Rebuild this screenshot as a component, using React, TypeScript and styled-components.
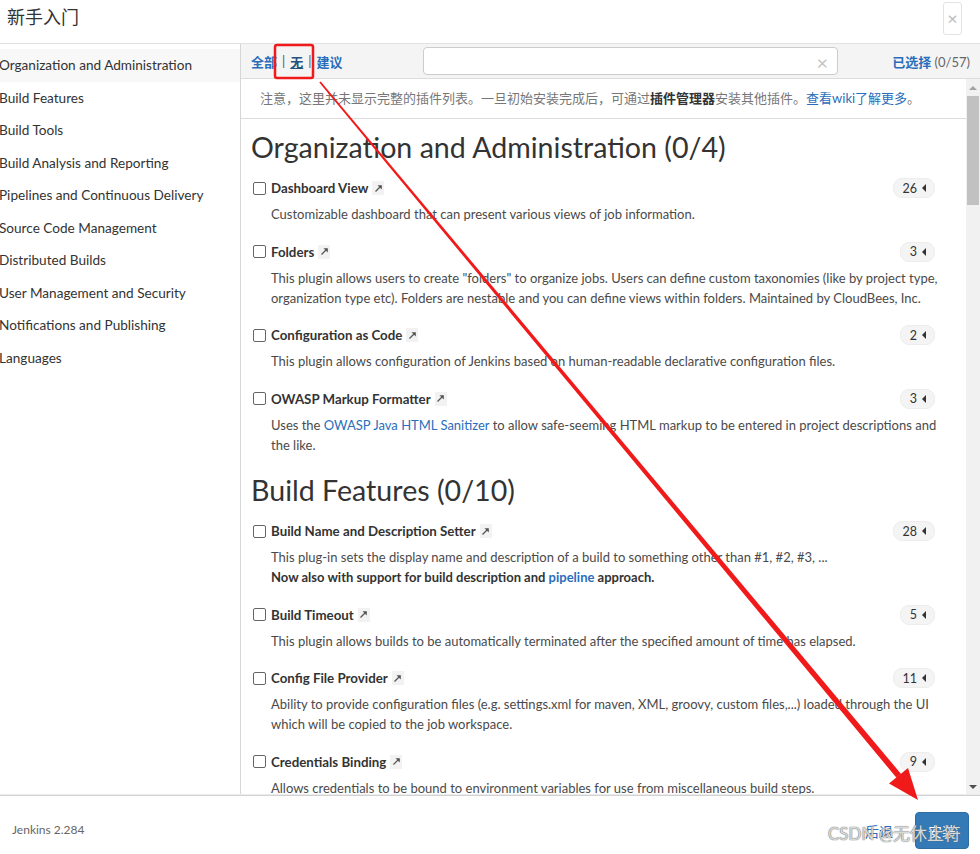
import React from "react";
import styled, { createGlobalStyle } from "styled-components";

const FONT = `Lato, "Noto Sans CJK SC", sans-serif`;

const GlobalStyle = createGlobalStyle`
  html, body {
    margin: 0;
    padding: 0;
    background: #fff;
  }
  body {
    font-family: ${FONT};
    color: #333;
  }
`;

type Plugin = {
  name: string;
  count: number;
  lines: React.ReactNode[];
};

type Category = {
  title: string;
  plugins: Plugin[];
};

const navItems = [
  "Organization and Administration",
  "Build Features",
  "Build Tools",
  "Build Analysis and Reporting",
  "Pipelines and Continuous Delivery",
  "Source Code Management",
  "Distributed Builds",
  "User Management and Security",
  "Notifications and Publishing",
  "Languages",
];

// built lazily so the styled link below is defined by then
function getCategories(): Category[] {
  return [
    {
      title: "Organization and Administration (0/4)",
      plugins: [
        {
          name: "Dashboard View",
          count: 26,
          lines: ["Customizable dashboard that can present various views of job information."],
        },
        {
          name: "Folders",
          count: 3,
          lines: [
            'This plugin allows users to create "folders" to organize jobs. Users can define custom taxonomies (like by project type,',
            "organization type etc). Folders are nestable and you can define views within folders. Maintained by CloudBees, Inc.",
          ],
        },
        {
          name: "Configuration as Code",
          count: 2,
          lines: ["This plugin allows configuration of Jenkins based on human-readable declarative configuration files."],
        },
        {
          name: "OWASP Markup Formatter",
          count: 3,
          lines: [
            <>
              Uses the <A>OWASP Java HTML Sanitizer</A> to allow safe-seeming HTML markup to be entered in project descriptions and
            </>,
            "the like.",
          ],
        },
      ],
    },
    {
      title: "Build Features (0/10)",
      plugins: [
        {
          name: "Build Name and Description Setter",
          count: 28,
          lines: [
            "This plug-in sets the display name and description of a build to something other than #1, #2, #3, ...",
            <b>
              Now also with support for build description and <A>pipeline</A> approach.
            </b>,
          ],
        },
        {
          name: "Build Timeout",
          count: 5,
          lines: ["This plugin allows builds to be automatically terminated after the specified amount of time has elapsed."],
        },
        {
          name: "Config File Provider",
          count: 11,
          lines: [
            "Ability to provide configuration files (e.g. settings.xml for maven, XML, groovy, custom files,...) loaded through the UI",
            "which will be copied to the job workspace.",
          ],
        },
        {
          name: "Credentials Binding",
          count: 9,
          lines: ["Allows credentials to be bound to environment variables for use from miscellaneous build steps."],
        },
      ],
    },
  ];
}

function ExternalIcon() {
  return (
    <ExtLink>
      <svg width="9" height="9" viewBox="0 0 9 9">
        <path d="M1.5 7.5 L7 2" stroke="#555" strokeWidth="1.2" fill="none" />
        <path d="M3.5 1.2 H7.8 V5.5 Z" fill="#555" />
      </svg>
    </ExtLink>
  );
}

export default function App() {
  const categories = getCategories();
  return (
    <Page>
      <GlobalStyle />
      <Header>
        <Title>新手入门</Title>
        <CloseBtn>×</CloseBtn>
      </Header>

      <Body>
        <Sidebar>
          {navItems.map((item, i) => (
            <NavItem key={item} $active={i === 0}>
              {item}
            </NavItem>
          ))}
        </Sidebar>

        <Main>
          <Toolbar>
            <FilterLinks>
              <FilterLink>全部</FilterLink>
              <Sep>|</Sep>
              <FilterLink $current>无</FilterLink>
              <Sep>|</Sep>
              <FilterLink>建议</FilterLink>
            </FilterLinks>
            <SearchBox>
              <ClearIcon>×</ClearIcon>
            </SearchBox>
            <SelectedInfo>
              <FilterLink>已选择</FilterLink> (0/57)
            </SelectedInfo>
          </Toolbar>

          <ScrollArea>
            <ScrollContent>
              <Notice>
                注意，这里并未显示完整的插件列表。一旦初始安装完成后，可通过<strong>插件管理器</strong>安装其他插件。
                <A>查看wiki了解更多</A>。
              </Notice>
              <PluginList>
                {categories.map((cat, ci) => (
                  <section key={cat.title}>
                    <CategoryTitle $first={ci === 0}>{cat.title}</CategoryTitle>
                    {cat.plugins.map((p) => (
                      <PluginItem key={p.name}>
                        <PluginHead>
                          <CheckBox />
                          <PluginName>{p.name}</PluginName>
                          <ExternalIcon />
                          <Badge>
                            {p.count}
                            <Caret />
                          </Badge>
                        </PluginHead>
                        <Desc>
                          {p.lines.map((line, i) => (
                            <DescLine key={i}>{line}</DescLine>
                          ))}
                        </Desc>
                      </PluginItem>
                    ))}
                  </section>
                ))}
              </PluginList>
            </ScrollContent>
            <Scrollbar>
              <ScrollArrow $dir="up" />
              <ScrollTrack>
                <ScrollThumb />
              </ScrollTrack>
              <ScrollArrow $dir="down" />
            </Scrollbar>
          </ScrollArea>
        </Main>
      </Body>

      <Footer>
        <Version>Jenkins 2.284</Version>
        <FooterActions>
          <BackLink>后退</BackLink>
          <InstallButton>安装</InstallButton>
        </FooterActions>
      </Footer>

      <Watermark>CSDN @无休止符</Watermark>

      <Annotation width="980" height="854" viewBox="0 0 980 854">
        <rect x="275" y="45" width="38" height="33" rx="2" fill="none" stroke="#f01a1a" strokeWidth="2.5" />
        <polygon points="320.7,81.4 319.3,82.6 896.5,777.8 901.1,774" fill="#f01a1a" />
        <polygon points="918,800 908,768 889,783.5" fill="#f01a1a" />
      </Annotation>
    </Page>
  );
}

const Page = styled.div`
  position: relative;
  width: 980px;
  height: 854px;
  overflow: hidden;
  display: flex;
  flex-direction: column;
  background: #fff;
`;

const Header = styled.header`
  height: 43px;
  flex: none;
  display: flex;
  align-items: center;
  justify-content: space-between;
  padding: 0 18px 0 7px;
  border-bottom: 1px solid #e2e2e2;
`;

const Title = styled.h1`
  margin: 0;
  font-size: 18px;
  font-weight: 400;
  color: #333;
  margin-top: -11px;
`;

const CloseBtn = styled.button`
  width: 19px;
  height: 33px;
  margin-top: -7px;
  padding: 0;
  border: 1px solid #e3e3e3;
  border-radius: 3px;
  background: #fff;
  color: #bbb;
  font-family: ${FONT};
  font-size: 18px;
  line-height: 1;
`;

const Body = styled.div`
  flex: 1;
  display: flex;
  min-height: 0;
`;

const Sidebar = styled.nav`
  width: 240px;
  flex: none;
  border-right: 1px solid #d6d6d6;
  padding-top: 5px;
`;

const NavItem = styled.div<{ $active?: boolean }>`
  height: 32.5px;
  line-height: 32.5px;
  font-size: 13.6px;
  color: #333;
  margin-left: -1px;
  white-space: nowrap;
  background: ${(p) => (p.$active ? "#f8f8f8" : "transparent")};
`;

const Main = styled.div`
  flex: 1;
  display: flex;
  flex-direction: column;
  min-width: 0;
`;

const Toolbar = styled.div`
  height: 34px;
  flex: none;
  display: grid;
  grid-template-columns: 172px 415px 1fr;
  align-items: center;
  padding: 0 10px;
  background: #f4f4f4;
  border-bottom: 1px solid #dcdcdc;
`;

const FilterLinks = styled.div`
  display: flex;
  align-items: center;
  gap: 5px;
  font-size: 13px;
`;

const FilterLink = styled.a<{ $current?: boolean }>`
  color: ${(p) => (p.$current ? "#23527c" : "#2a6ebb")};
  font-weight: 700;
  text-decoration: ${(p) => (p.$current ? "underline" : "none")};
  cursor: pointer;
`;

const Sep = styled.span`
  color: #555;
`;

const SearchBox = styled.div`
  height: 28px;
  box-sizing: border-box;
  border: 1px solid #ccc;
  border-radius: 4px;
  background: #fff;
  position: relative;
`;

const ClearIcon = styled.span`
  position: absolute;
  right: 9px;
  top: 4px;
  font-size: 20px;
  line-height: 20px;
  color: #c4c4c4;
`;

const SelectedInfo = styled.div`
  justify-self: end;
  font-size: 13px;
  color: #666;
`;

const ScrollArea = styled.div`
  flex: 1;
  display: flex;
  min-height: 0;
`;

const ScrollContent = styled.div`
  flex: 1;
  min-width: 0;
  overflow: hidden;
`;

const Notice = styled.div`
  height: 39px;
  line-height: 39px;
  padding-left: 19px;
  border-bottom: 1px solid #dcdcdc;
  font-size: 13px;
  color: #777;
  white-space: nowrap;

  strong {
    color: #333;
    font-weight: 700;
  }
`;

const A = styled.a`
  color: #2a6ebb;
  text-decoration: none;
`;

const PluginList = styled.div`
  padding: 1px 16px 0 0;
`;

const CategoryTitle = styled.h2<{ $first?: boolean }>`
  margin: ${(p) => (p.$first ? "10px" : "18.5px")} 0 14px 10px;
  font-size: 28.6px;
  line-height: 34px;
  font-weight: 400;
  color: #333;
`;

const PluginItem = styled.div`
  padding-left: 12px;
  margin-bottom: 17.5px;
`;

const PluginHead = styled.div`
  height: 20px;
  display: flex;
  align-items: center;
`;

const CheckBox = styled.span`
  width: 13px;
  height: 13px;
  box-sizing: border-box;
  border: 1px solid #666;
  border-radius: 2px;
  background: #fff;
  margin-right: 5px;
  flex: none;
`;

const PluginName = styled.span`
  font-size: 13.3px;
  font-weight: 700;
  color: #333;
`;

const ExtLink = styled.span`
  display: inline-flex;
  align-items: center;
  justify-content: center;
  width: 12px;
  height: 14px;
  margin-left: 4px;
  background: #f2f2f2;
`;

const Badge = styled.span`
  margin-left: auto;
  margin-right: 15px;
  height: 18px;
  display: inline-flex;
  align-items: center;
  gap: 5px;
  padding: 0 8px 0 9px;
  border-radius: 9px;
  background: #f4f4f4;
  border: 1px solid #ededed;
  font-size: 12.5px;
  color: #333;
`;

const Caret = styled.span`
  width: 0;
  height: 0;
  border-top: 4.5px solid transparent;
  border-bottom: 4.5px solid transparent;
  border-right: 4.5px solid #333;
`;

const Desc = styled.div`
  margin-top: 6px;
  padding-left: 18px;
  font-size: 13px;
  line-height: 20px;
  color: #4a4a4a;
`;

const DescLine = styled.div`
  white-space: nowrap;

  b {
    color: #333;
  }
`;

const Scrollbar = styled.div`
  width: 14px;
  flex: none;
  display: flex;
  flex-direction: column;
  background: #f1f1f1;
`;

const ScrollArrow = styled.div<{ $dir: "up" | "down" }>`
  height: 17px;
  flex: none;
  display: flex;
  align-items: center;
  justify-content: center;

  &::before {
    content: "";
    width: 0;
    height: 0;
    border-left: 4px solid transparent;
    border-right: 4px solid transparent;
    ${(p) =>
      p.$dir === "up"
        ? "border-bottom: 4px solid #a3a3a3;"
        : "border-top: 4px solid #505050;"}
  }
`;

const ScrollTrack = styled.div`
  flex: 1;
  padding: 0 1px;
`;

const ScrollThumb = styled.div`
  height: 109px;
  background: #c1c1c1;
`;

const Footer = styled.footer`
  height: 58px;
  flex: none;
  display: flex;
  align-items: center;
  justify-content: space-between;
  padding: 0 11px 0 12px;
  border-top: 1px solid #d2d2d2;
  box-shadow: 0 -1px 0 #ececec;
`;

const Version = styled.span`
  font-size: 12px;
  color: #666;
  margin-top: 8px;
`;

const FooterActions = styled.div`
  display: flex;
  align-items: center;
  gap: 22px;
  margin-top: 11px;
`;

const BackLink = styled.a`
  font-size: 14px;
  color: #2a6ebb;
`;

const InstallButton = styled.button`
  width: 54px;
  height: 37px;
  border: 1px solid #2e6da4;
  border-radius: 4px;
  background: #337ab7;
  color: #fff;
  font-family: ${FONT};
  font-size: 14px;
`;

const Watermark = styled.div`
  position: absolute;
  left: 828px;
  top: 822px;
  font-size: 17px;
  line-height: 24px;
  color: rgba(255, 255, 255, 0.75);
  text-shadow: 0 0 1px #666, 0 0 1px #666;
  white-space: nowrap;
  pointer-events: none;
`;

const Annotation = styled.svg`
  position: absolute;
  left: 0;
  top: 0;
  pointer-events: none;
`;
